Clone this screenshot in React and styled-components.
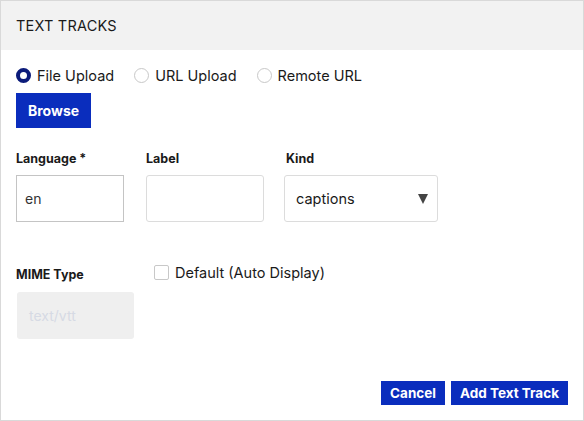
import React from "react";
import styled, { createGlobalStyle } from "styled-components";

const GlobalStyle = createGlobalStyle`
  html, body { margin: 0; padding: 0; background: #fff; }
  body { font-family: "Inter", "Liberation Sans", sans-serif; color: #1a1a1a; }
  * { box-sizing: border-box; }
`;

const blue = "#0a2dbd";

function App() {
  return (
    <>
      <GlobalStyle />
      <Panel>
        <Header>TEXT TRACKS</Header>
        <Body>
          <RadioRow>
            <RadioItem>
              <Radio checked />
              File Upload
            </RadioItem>
            <RadioItem>
              <Radio />
              URL Upload
            </RadioItem>
            <RadioItem>
              <Radio />
              Remote URL
            </RadioItem>
          </RadioRow>
          <BlueButton>Browse</BlueButton>

          <FieldRow>
            <Field w={108}>
              <FieldLabel>Language *</FieldLabel>
              <Input square value="en" readOnly />
            </Field>
            <Field w={118} ml={22}>
              <FieldLabel>Label</FieldLabel>
              <Input readOnly />
            </Field>
            <Field w={154} ml={20}>
              <FieldLabel style={{ paddingLeft: 2 }}>Kind</FieldLabel>
              <Select>
                captions
                <Caret />
              </Select>
            </Field>
          </FieldRow>

          <MimeRow>
            <Field w={118}>
              <FieldLabel tall>MIME Type</FieldLabel>
              <Disabled>text/vtt</Disabled>
            </Field>
            <CheckItem>
              <Check />
              Default (Auto Display)
            </CheckItem>
          </MimeRow>
        </Body>
        <Footer>
          <BlueButton small>Cancel</BlueButton>
          <BlueButton small>Add Text Track</BlueButton>
        </Footer>
      </Panel>
    </>
  );
}

const Panel = styled.div`
  width: 584px;
  height: 421px;
  border: 1px solid #d9d9d9;
  display: flex;
  flex-direction: column;
`;

const Header = styled.div`
  height: 49px;
  background: #f2f2f2;
  display: flex;
  align-items: center;
  padding-left: 15px;
  font-size: 14.5px;
  letter-spacing: 0.2px;
`;

const Body = styled.div`
  padding: 16px 15px 0 15px;
  flex: 1;
`;

const RadioRow = styled.div`
  display: flex;
  height: 18px;
  align-items: center;
`;

const RadioItem = styled.label`
  display: flex;
  align-items: center;
  font-size: 14.5px;
  margin-right: 20px;
  gap: 6px;
`;

const Radio = styled.span`
  width: 15px;
  height: 15px;
  border-radius: 50%;
  border: ${(p) => (p.checked ? `4px solid #0b1b7a` : "1px solid #c8c8c8")};
  background: #fff;
  display: inline-block;
`;

const BlueButton = styled.button`
  background: ${blue};
  color: #fff;
  border: none;
  font-family: inherit;
  font-weight: 700;
  font-size: ${(p) => (p.small ? 13.5 : 14)}px;
  padding: 0 ${(p) => (p.small ? 9 : 12)}px;
  height: ${(p) => (p.small ? 24 : 35)}px;
  margin-top: ${(p) => (p.small ? 0 : 9)}px;
  display: block;
`;

const FieldRow = styled.div`
  display: flex;
  margin-top: 23px;
`;

const Field = styled.div`
  width: ${(p) => p.w}px;
  margin-left: ${(p) => p.ml || 0}px;
  display: flex;
  flex-direction: column;
`;

const FieldLabel = styled.div`
  font-size: 12.5px;
  font-weight: 700;
  height: ${(p) => (p.tall ? 25 : 24)}px;
`;

const Input = styled.input`
  width: 100%;
  height: 47px;
  border: 1px solid ${(p) => (p.square ? "#c4c4c4" : "#dcdcdc")};
  border-radius: ${(p) => (p.square ? 0 : 3)}px;
  font-family: inherit;
  font-size: 14px;
  color: #333;
  padding: 0 8px;
  outline: none;
`;

const Select = styled.div`
  position: relative;
  height: 47px;
  border: 1px solid #dcdcdc;
  border-radius: 3px;
  display: flex;
  align-items: center;
  padding-left: 11px;
  font-size: 14.5px;
`;

const Caret = styled.span`
  position: absolute;
  right: 9px;
  top: 18px;
  width: 0;
  height: 0;
  border-left: 5px solid transparent;
  border-right: 5px solid transparent;
  border-top: 10px solid #444;
`;

const MimeRow = styled.div`
  display: flex;
  margin-top: 45px;
  align-items: flex-start;
`;

const Disabled = styled.div`
  height: 47px;
  background: #efefef;
  border-radius: 3px;
  margin-left: 1px;
  display: flex;
  align-items: center;
  padding-left: 12px;
  color: #d6dae4;
  font-size: 14px;
`;

const CheckItem = styled.label`
  display: flex;
  align-items: center;
  gap: 6px;
  font-size: 14.5px;
  margin-left: 20px;
  margin-top: -3px;
`;

const Check = styled.span`
  width: 15px;
  height: 15px;
  border: 1px solid #c8c8c8;
  border-radius: 2px;
  background: #fff;
`;

const Footer = styled.div`
  display: flex;
  justify-content: flex-end;
  gap: 6px;
  padding: 0 15px 15px 0;
`;

export default App;
